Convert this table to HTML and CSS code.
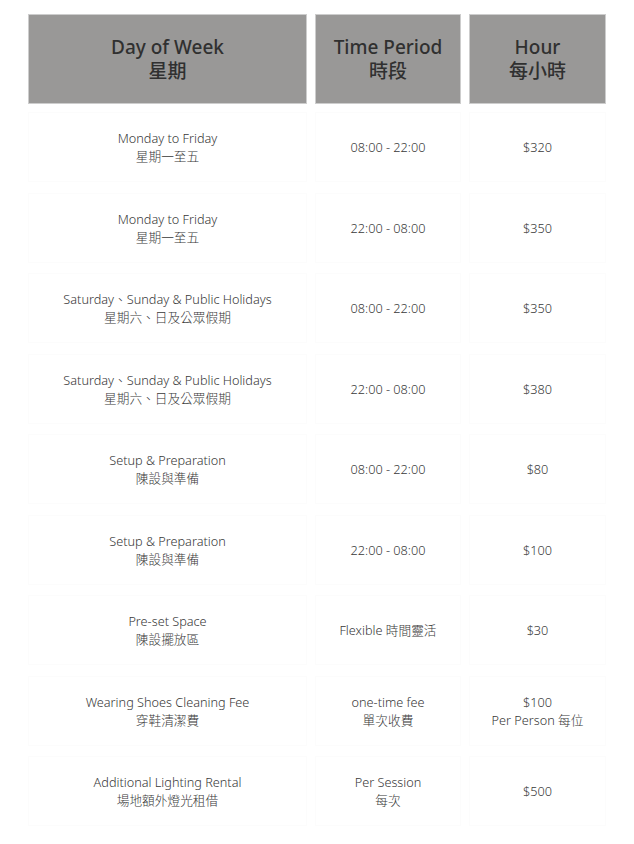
FILE: index.html
```html
<!DOCTYPE html>
<html lang="zh-Hant">
<head>
<meta charset="utf-8">
<title>Rates</title>
<link rel="stylesheet" href="styles.css">
</head>
<body>
<div class="table">
  <div class="head">
    <div class="hcell">Day of Week<br>星期</div>
    <div class="hcell">Time Period<br>時段</div>
    <div class="hcell">Hour<br>每小時</div>
  </div>
  <div class="rows">
    <div class="cell">Monday to Friday<br>星期一至五</div>
    <div class="cell">08:00 - 22:00</div>
    <div class="cell">$320</div>

    <div class="cell">Monday to Friday<br>星期一至五</div>
    <div class="cell">22:00 - 08:00</div>
    <div class="cell">$350</div>

    <div class="cell">Saturday、Sunday &amp; Public Holidays<br>星期六、日及公眾假期</div>
    <div class="cell">08:00 - 22:00</div>
    <div class="cell">$350</div>

    <div class="cell">Saturday、Sunday &amp; Public Holidays<br>星期六、日及公眾假期</div>
    <div class="cell">22:00 - 08:00</div>
    <div class="cell">$380</div>

    <div class="cell">Setup &amp; Preparation<br>陳設與準備</div>
    <div class="cell">08:00 - 22:00</div>
    <div class="cell">$80</div>

    <div class="cell">Setup &amp; Preparation<br>陳設與準備</div>
    <div class="cell">22:00 - 08:00</div>
    <div class="cell">$100</div>

    <div class="cell">Pre-set Space<br>陳設擺放區</div>
    <div class="cell">Flexible 時間靈活</div>
    <div class="cell">$30</div>

    <div class="cell">Wearing Shoes Cleaning Fee<br>穿鞋清潔費</div>
    <div class="cell">one-time fee<br>單次收費</div>
    <div class="cell">$100<br>Per Person 每位</div>

    <div class="cell">Additional Lighting Rental<br>場地額外燈光租借</div>
    <div class="cell">Per Session<br>每次</div>
    <div class="cell">$500</div>
  </div>
</div>
</body>
</html>
```

FILE: styles.css
```css
html, body {
  margin: 0;
  padding: 0;
  background: #ffffff;
}
body {
  font-family: "Noto Sans", "Noto Sans CJK TC", sans-serif;
  color: #363636;
}
.table {
  padding: 14px 28px 0 28px;
}
.head, .rows {
  display: grid;
  grid-template-columns: 279px 146px 137px;
  column-gap: 8px;
}
.head {
  height: 90px;
}
.hcell {
  background: #999897;
  border: 1px solid #cdcdcd;
  display: flex;
  align-items: center;
  justify-content: center;
  text-align: center;
  font-size: 19px;
  font-weight: 500;
  line-height: 24px;
  color: #303030;
}
.rows {
  margin-top: 8px;
  grid-auto-rows: 70px;
  row-gap: 10.5px;
}
.cell {
  background: #ffffff;
  border: 1px solid #fcfcfc;
  display: flex;
  align-items: center;
  justify-content: center;
  text-align: center;
  font-size: 12.7px;
  font-weight: 300;
  line-height: 18px;
  color: #383838;
}
```
